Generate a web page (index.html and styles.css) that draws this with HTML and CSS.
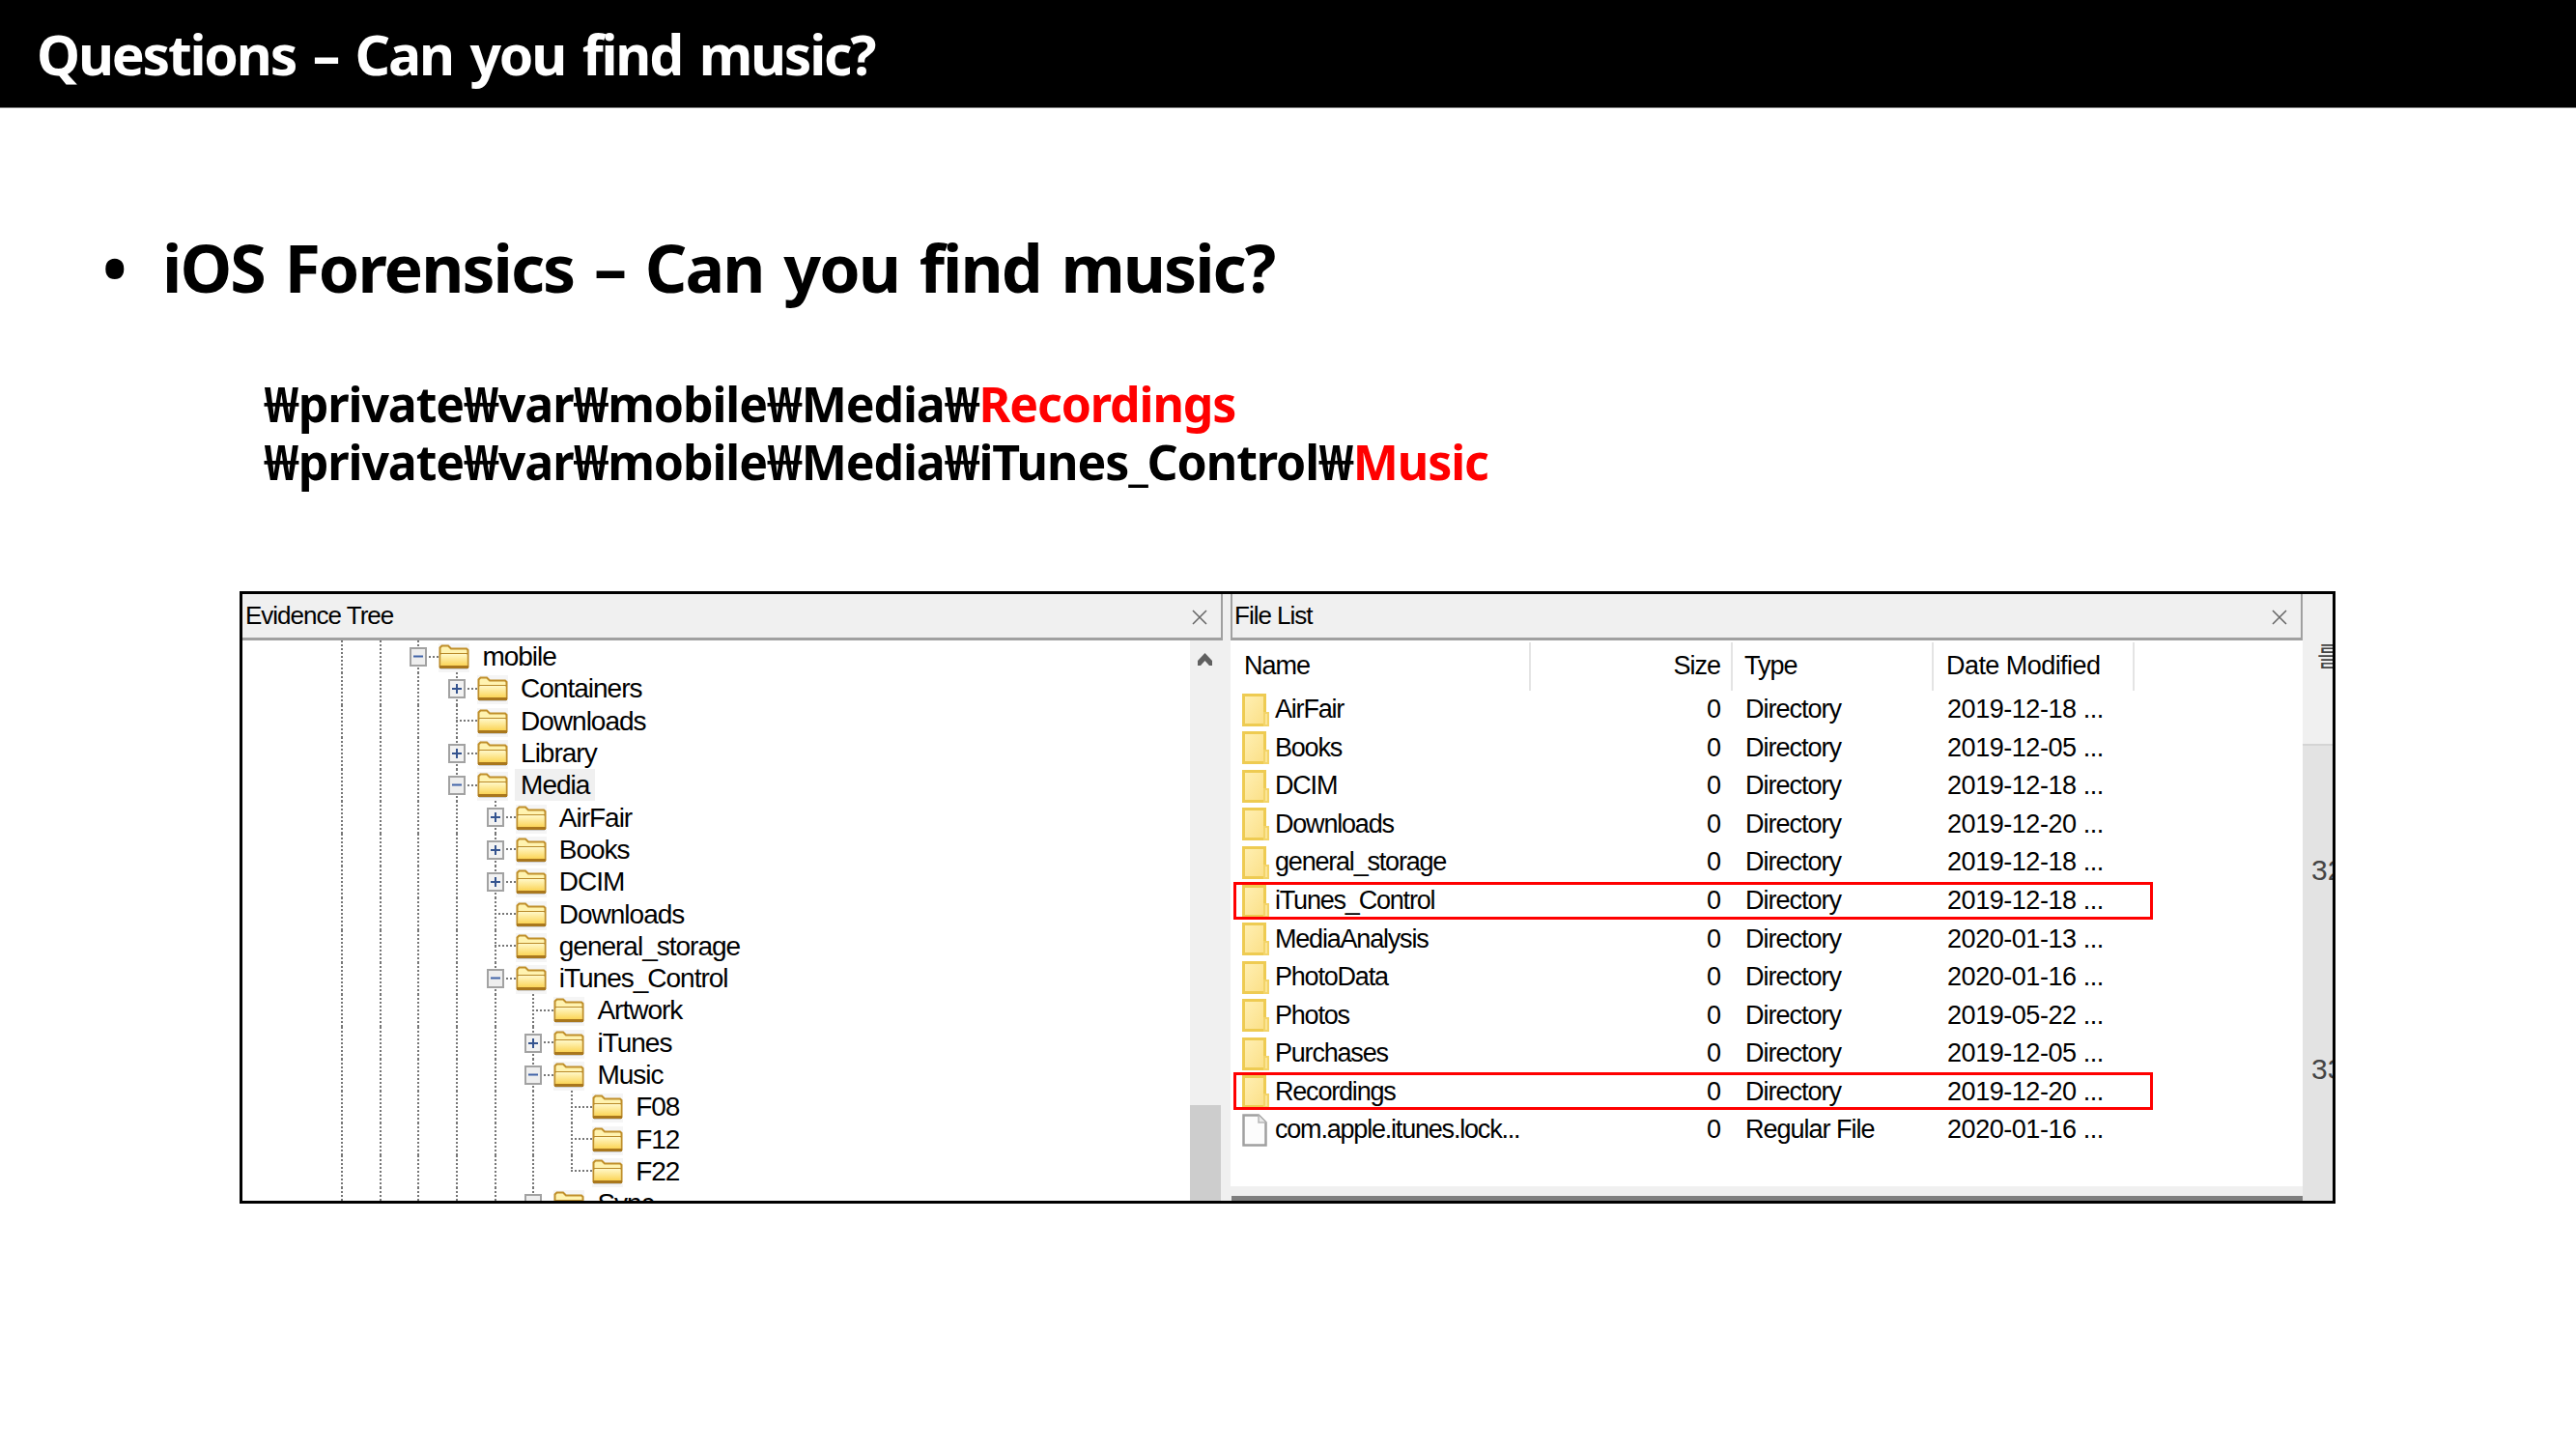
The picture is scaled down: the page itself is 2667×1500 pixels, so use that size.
FILE: index.html
```html
<!DOCTYPE html>
<html lang="ko">
<head>
<meta charset="utf-8">
<title>Questions – Can you find music?</title>
<link rel="stylesheet" href="styles.css">
</head>
<body>
<svg class="defs" width="0" height="0" aria-hidden="true">
  <defs>
    <linearGradient id="fb" x1="0" y1="0" x2="0" y2="1">
      <stop offset="0" stop-color="#fff8c8"/><stop offset="1" stop-color="#fbd24e"/>
    </linearGradient>
    <linearGradient id="lf" x1="0" y1="0" x2="1" y2="1">
      <stop offset="0" stop-color="#fff0b4"/><stop offset="1" stop-color="#fbdf86"/>
    </linearGradient>
    <symbol id="tf" viewBox="0 0 32 30">
      <rect x="0" y="0" width="32" height="30" fill="#f5f5f5"/>
      <path d="M1.5 24V4.5L3.5 2.5H10L13 5.5H29L30.5 7V24Z" fill="#fff3b0" stroke="#c08f2a" stroke-width="2"/>
      <rect x="2" y="10" width="28" height="2" fill="#b98a2a"/>
      <rect x="2.5" y="11" width="27" height="13" fill="url(#fb)"/>
      <rect x="1" y="23" width="30" height="3" fill="#a9771c"/>
      <rect x="2" y="26" width="28" height="1" fill="#cfcfcf"/>
    </symbol>
    <symbol id="lfolder" viewBox="0 0 28 34">
      <rect x="1.5" y="1.5" width="22" height="31" fill="url(#lf)" stroke="#eecb52" stroke-width="3"/>
      <rect x="22" y="19" width="6" height="15" fill="#f3d469"/>
      <rect x="24" y="21" width="2" height="11" fill="#fbe596"/>
    </symbol>
    <symbol id="lfile" viewBox="0 0 28 34">
      <path d="M1.5 1.5H17L24.5 9V32.5H1.5Z" fill="#fcfcfc" stroke="#a0a0a0" stroke-width="2.5"/>
      <path d="M17 1.5V9H24.5" fill="#e8e8e8" stroke="#b5b5b5" stroke-width="1.5"/>
    </symbol>
    <symbol id="close" viewBox="0 0 16 16">
      <path d="M1 1L15 15M15 1L1 15" fill="none" stroke="#666" stroke-width="1.5"/>
    </symbol>
    <symbol id="plus" viewBox="0 0 18 20">
      <rect x="1" y="1" width="16" height="18" fill="#f2f2f2" stroke="#a2a2a2" stroke-width="2"/>
      <path d="M4 10H14M9 5V15" stroke="#35548f" stroke-width="2" fill="none"/>
    </symbol>
    <symbol id="minus" viewBox="0 0 18 20">
      <rect x="1" y="1" width="16" height="18" fill="#eeeeee" stroke="#a2a2a2" stroke-width="2"/>
      <path d="M4 9.5H14" stroke="#4265a8" stroke-width="2" fill="none"/>
    </symbol>
  </defs>
</svg>

<div class="slide">
  <header class="titlebar"><h1 class="title">Questions – Can you find music?</h1></header>

  <main class="content">
    <h2 class="bullet"><span class="dot">•</span><span>iOS Forensics – Can you find music?</span></h2>

    <p class="paths">
      <span class="path">₩private₩var₩mobile₩Media₩<em class="hot">Recordings</em></span>
      <span class="path">₩private₩var₩mobile₩Media₩iTunes_Control₩<em class="hot">Music</em></span>
    </p>

    <section class="shot">
      <div class="pane tree-pane">
        <div class="pane-head"><span class="pane-title">Evidence Tree</span><svg class="x"><use href="#close"/></svg></div>
        <div class="pane-body">
          <div class="tree">
            <div class="node"><i class="g"></i><i class="g"></i><span class="c"><svg class="exp"><use href="#minus"/></svg></span><svg class="tfolder"><use href="#tf"/></svg><span class="lbl">mobile</span></div>
            <div class="node"><i class="g"></i><i class="g"></i><i class="g"></i><span class="c"><svg class="exp"><use href="#plus"/></svg></span><svg class="tfolder"><use href="#tf"/></svg><span class="lbl">Containers</span></div>
            <div class="node"><i class="g"></i><i class="g"></i><i class="g"></i><span class="c"></span><svg class="tfolder"><use href="#tf"/></svg><span class="lbl">Downloads</span></div>
            <div class="node"><i class="g"></i><i class="g"></i><i class="g"></i><span class="c"><svg class="exp"><use href="#plus"/></svg></span><svg class="tfolder"><use href="#tf"/></svg><span class="lbl">Library</span></div>
            <div class="node"><i class="g"></i><i class="g"></i><i class="g"></i><span class="c"><svg class="exp"><use href="#minus"/></svg></span><svg class="tfolder"><use href="#tf"/></svg><span class="lbl sel">Media</span></div>
            <div class="node"><i class="g"></i><i class="g"></i><i class="g"></i><i class="g"></i><span class="c"><svg class="exp"><use href="#plus"/></svg></span><svg class="tfolder"><use href="#tf"/></svg><span class="lbl">AirFair</span></div>
            <div class="node"><i class="g"></i><i class="g"></i><i class="g"></i><i class="g"></i><span class="c"><svg class="exp"><use href="#plus"/></svg></span><svg class="tfolder"><use href="#tf"/></svg><span class="lbl">Books</span></div>
            <div class="node"><i class="g"></i><i class="g"></i><i class="g"></i><i class="g"></i><span class="c"><svg class="exp"><use href="#plus"/></svg></span><svg class="tfolder"><use href="#tf"/></svg><span class="lbl">DCIM</span></div>
            <div class="node"><i class="g"></i><i class="g"></i><i class="g"></i><i class="g"></i><span class="c"></span><svg class="tfolder"><use href="#tf"/></svg><span class="lbl">Downloads</span></div>
            <div class="node"><i class="g"></i><i class="g"></i><i class="g"></i><i class="g"></i><span class="c"></span><svg class="tfolder"><use href="#tf"/></svg><span class="lbl">general_storage</span></div>
            <div class="node"><i class="g"></i><i class="g"></i><i class="g"></i><i class="g"></i><span class="c"><svg class="exp"><use href="#minus"/></svg></span><svg class="tfolder"><use href="#tf"/></svg><span class="lbl">iTunes_Control</span></div>
            <div class="node"><i class="g"></i><i class="g"></i><i class="g"></i><i class="g"></i><i class="g"></i><span class="c"></span><svg class="tfolder"><use href="#tf"/></svg><span class="lbl">Artwork</span></div>
            <div class="node"><i class="g"></i><i class="g"></i><i class="g"></i><i class="g"></i><i class="g"></i><span class="c"><svg class="exp"><use href="#plus"/></svg></span><svg class="tfolder"><use href="#tf"/></svg><span class="lbl">iTunes</span></div>
            <div class="node"><i class="g"></i><i class="g"></i><i class="g"></i><i class="g"></i><i class="g"></i><span class="c"><svg class="exp"><use href="#minus"/></svg></span><svg class="tfolder"><use href="#tf"/></svg><span class="lbl">Music</span></div>
            <div class="node"><i class="g"></i><i class="g"></i><i class="g"></i><i class="g"></i><i class="g"></i><i class="g"></i><span class="c"></span><svg class="tfolder"><use href="#tf"/></svg><span class="lbl">F08</span></div>
            <div class="node"><i class="g"></i><i class="g"></i><i class="g"></i><i class="g"></i><i class="g"></i><i class="g"></i><span class="c"></span><svg class="tfolder"><use href="#tf"/></svg><span class="lbl">F12</span></div>
            <div class="node"><i class="g"></i><i class="g"></i><i class="g"></i><i class="g"></i><i class="g"></i><i class="g"></i><span class="c last"></span><svg class="tfolder"><use href="#tf"/></svg><span class="lbl">F22</span></div>
            <div class="node"><i class="g"></i><i class="g"></i><i class="g"></i><i class="g"></i><i class="g"></i><span class="c"><svg class="exp"><use href="#minus"/></svg></span><svg class="tfolder"><use href="#tf"/></svg><span class="lbl">Sync</span></div>
          </div>
          <div class="vscroll">
            <svg class="up" viewBox="0 0 15 13"><path d="M7.5 0L15 8V13H12L7.5 8L3 13H0V8Z" fill="#606060"/></svg>
            <div class="thumb"></div>
          </div>
        </div>
      </div>

      <div class="pane list-pane">
        <div class="pane-head"><span class="pane-title">File List</span><svg class="x"><use href="#close"/></svg></div>
        <div class="list-body">
          <div class="grid cols">
            <div class="col name-col">Name</div>
            <div class="col size-col">Size</div>
            <div class="col type-col">Type</div>
            <div class="col date-col">Date Modified</div>
          </div>
          <div class="grid row"><div class="name"><svg class="ico"><use href="#lfolder"/></svg>AirFair</div><div class="size">0</div><div class="type">Directory</div><div class="date">2019-12-18 ...</div></div>
          <div class="grid row"><div class="name"><svg class="ico"><use href="#lfolder"/></svg>Books</div><div class="size">0</div><div class="type">Directory</div><div class="date">2019-12-05 ...</div></div>
          <div class="grid row"><div class="name"><svg class="ico"><use href="#lfolder"/></svg>DCIM</div><div class="size">0</div><div class="type">Directory</div><div class="date">2019-12-18 ...</div></div>
          <div class="grid row"><div class="name"><svg class="ico"><use href="#lfolder"/></svg>Downloads</div><div class="size">0</div><div class="type">Directory</div><div class="date">2019-12-20 ...</div></div>
          <div class="grid row"><div class="name"><svg class="ico"><use href="#lfolder"/></svg>general_storage</div><div class="size">0</div><div class="type">Directory</div><div class="date">2019-12-18 ...</div></div>
          <div class="grid row mark"><div class="name"><svg class="ico"><use href="#lfolder"/></svg>iTunes_Control</div><div class="size">0</div><div class="type">Directory</div><div class="date">2019-12-18 ...</div></div>
          <div class="grid row"><div class="name"><svg class="ico"><use href="#lfolder"/></svg>MediaAnalysis</div><div class="size">0</div><div class="type">Directory</div><div class="date">2020-01-13 ...</div></div>
          <div class="grid row"><div class="name"><svg class="ico"><use href="#lfolder"/></svg>PhotoData</div><div class="size">0</div><div class="type">Directory</div><div class="date">2020-01-16 ...</div></div>
          <div class="grid row"><div class="name"><svg class="ico"><use href="#lfolder"/></svg>Photos</div><div class="size">0</div><div class="type">Directory</div><div class="date">2019-05-22 ...</div></div>
          <div class="grid row"><div class="name"><svg class="ico"><use href="#lfolder"/></svg>Purchases</div><div class="size">0</div><div class="type">Directory</div><div class="date">2019-12-05 ...</div></div>
          <div class="grid row mark"><div class="name"><svg class="ico"><use href="#lfolder"/></svg>Recordings</div><div class="size">0</div><div class="type">Directory</div><div class="date">2019-12-20 ...</div></div>
          <div class="grid row"><div class="name"><svg class="ico"><use href="#lfile"/></svg>com.apple.itunes.lock...</div><div class="size">0</div><div class="type">Regular File</div><div class="date">2020-01-16 ...</div></div>
        </div>
        <div class="hscroll"><div class="hbar"></div></div>
      </div>

      <aside class="strip">
        <div class="strip-top"><span class="strip-glyph">를</span></div>
        <div class="strip-low"><span class="strip-num first">32</span><span class="strip-num second">33</span></div>
      </aside>
    </section>
  </main>
</div>
</body>
</html>
```

FILE: styles.css
```css
*, *::before, *::after { box-sizing: border-box; }
html, body { margin: 0; padding: 0; background: #fff; }
body { width: 2667px; height: 1500px; overflow: hidden; font-family: "Noto Sans", "Noto Sans CJK KR", sans-serif; color: #000; }
.defs { display: block; height: 0; }

.slide { display: flex; flex-direction: column; height: 1500px; }

.titlebar { height: 112px; background: #000; border-bottom: 1px solid #808080; display: flex; align-items: center; padding: 2px 0 0 38px; flex: none; }
.title { margin: 0; color: #fff; font-size: 57px; font-weight: 700; line-height: 1; letter-spacing: -2.2px; word-spacing: 5px; }

.content { flex: 1; display: flex; flex-direction: column; }

.bullet { margin: 125px 0 0 106px; display: flex; font-size: 68px; font-weight: 700; line-height: 80px; letter-spacing: -1.95px; word-spacing: 5px; }
.dot { width: 62px; flex: none; }

.paths { margin: 71px 0 0 273px; display: flex; flex-direction: column; font-size: 50px; font-weight: 700; line-height: 60px; letter-spacing: -1.1px; }
.path { display: block; white-space: nowrap; }
.hot { color: #ff0000; font-style: normal; }

.shot { margin: 104px 0 0 248px; width: 2170px; height: 634px; flex: none; border: 3px solid #000; display: flex; background: #f0f0f0; overflow: hidden; font-family: "Liberation Sans", sans-serif; }

.pane { display: flex; flex-direction: column; flex: none; }
.tree-pane { width: 1015px; }
.list-pane { width: 1110px; margin-left: 8px; }

.pane-head { height: 48px; flex: none; display: flex; align-items: center; justify-content: space-between; background: #f0f0f0; border-bottom: 3px solid #a0a0a0; border-right: 2px solid #a0a0a0; padding: 0 14px 0 3px; }
.list-pane .pane-head { border-left: 2px solid #a0a0a0; padding: 0 14px 0 2px; }
.pane-title { font-size: 26px; letter-spacing: -1px; }
.x { width: 16px; height: 16px; margin-top: 3px; flex: none; }

.pane-body { flex: 1; display: flex; min-height: 0; background: #fff; }
.tree { flex: 1; padding-left: 102px; overflow: hidden; }
.node { height: 33.3px; display: flex; align-items: center; font-size: 28px; letter-spacing: -1px; white-space: nowrap; }
.g { width: 39.7px; height: 100%; flex: none; background: repeating-linear-gradient(to bottom, #777 0 2px, transparent 2px 4px) no-repeat 0 0 / 2px 100%; }
.c { width: 22px; height: 100%; flex: none; position: relative; background: repeating-linear-gradient(to bottom, #777 0 2px, transparent 2px 4px) no-repeat 0 0 / 2px 100%, repeating-linear-gradient(to right, #777 0 2px, transparent 2px 4px) no-repeat 0 center / 100% 2px; }
.c.last { background: repeating-linear-gradient(to bottom, #777 0 2px, transparent 2px 4px) no-repeat 0 0 / 2px 50%, repeating-linear-gradient(to right, #777 0 2px, transparent 2px 4px) no-repeat 0 center / 100% 2px; }
.exp { position: absolute; left: -8px; top: 7px; width: 18px; height: 20px; }
.tfolder { width: 32px; height: 30px; flex: none; margin-top: 3px; }
.lbl { margin-left: 7px; padding: 0 6px; line-height: 33px; }
.lbl.sel { background: #f0f0f0; }

.vscroll { width: 34px; flex: none; background: #f0f0f0; display: flex; flex-direction: column; align-items: center; position: relative; }
.up { width: 15px; height: 13px; margin-top: 13px; margin-right: 3px; }
.thumb { width: 32px; height: 99px; margin: auto 2px 0 0; background: #cdcdcd; flex: none; }

.list-body { flex: 1; background: #fff; min-height: 0; font-size: 27px; letter-spacing: -1px; }
.grid { display: grid; grid-template-columns: 311px 209px 208px 208px; white-space: nowrap; }
.cols { height: 52px; padding-top: 2px; }
.col { border-right: 2px solid #e4e4e4; display: flex; align-items: center; padding-bottom: 2px; }
.name-col { padding-left: 14px; }
.size-col { justify-content: flex-end; padding-right: 11px; }
.type-col { padding-left: 12px; }
.date-col { padding-left: 13px; letter-spacing: -0.55px; }
.row { height: 39.55px; align-items: center; position: relative; }
.name { display: flex; align-items: center; padding-left: 12px; gap: 6px; letter-spacing: -1.2px; }
.ico { width: 28px; height: 34px; flex: none; }
.size { text-align: right; padding-right: 13px; }
.type { padding-left: 13px; }
.date { padding-left: 14px; letter-spacing: -0.45px; }
.row.mark::after { content: ""; position: absolute; left: 3px; top: 0; width: 952px; height: 39px; border: 3px solid #f00; }

.hscroll { height: 15px; flex: none; background: #f0f0f0; padding-top: 10px; }
.hbar { height: 5px; margin-left: 1px; background: #7f7f7f; }

.strip { flex: 1; display: flex; flex-direction: column; overflow: hidden; color: #444; font-family: "Noto Sans CJK KR", sans-serif; background: #e3e3e3; }
.strip-top { height: 157px; flex: none; background: #f0f0f0; border-bottom: 2px solid #d4d4d4; padding: 43px 0 0 15px; }
.strip-glyph { display: block; font-size: 28px; line-height: 40px; white-space: nowrap; }
.strip-low { flex: 1; display: flex; flex-direction: column; padding-left: 9px; }
.strip-num { font-family: "Liberation Sans", sans-serif; font-size: 30px; line-height: 36px; white-space: nowrap; }
.strip-num.first { margin-top: 111px; }
.strip-num.second { margin-top: 170px; }
```
